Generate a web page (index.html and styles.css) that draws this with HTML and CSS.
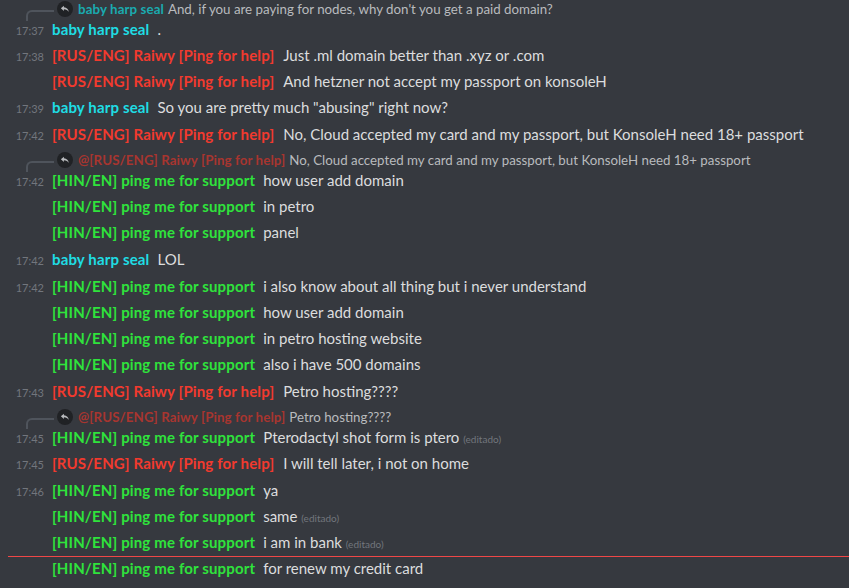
FILE: index.html
```html
<!DOCTYPE html>
<html>
<head>
<meta charset="utf-8">
<link rel="stylesheet" href="styles.css">
</head>
<body>
<div class="chat">
  <div class="reply">
    <span class="spine"></span>
    <span class="ricon"><svg viewBox="0 0 16 16" width="12" height="12"><path d="M6.5 3.5 L2.5 7 L6.5 10.5 V8.3 C9.5 8.3 11.5 9.3 13 12 C12.5 8.5 10.5 6.2 6.5 5.8 Z" fill="#b9bbbe"/></svg></span>
    <span class="rname cyan">baby harp seal</span>
    <span class="rtext">And, if you are paying for nodes, why don't you get a paid domain?</span>
  </div>
  <div class="msg"><span class="ts">17:37</span><span class="name cyan">baby harp seal</span><span class="txt">.</span></div>
  <div class="msg"><span class="ts">17:38</span><span class="name red">[RUS/ENG] Raiwy [Ping for help]</span><span class="txt">Just .ml domain better than .xyz or .com</span></div>
  <div class="msg"><span class="ts"></span><span class="name red">[RUS/ENG] Raiwy [Ping for help]</span><span class="txt">And hetzner not accept my passport on konsoleH</span></div>
  <div class="msg"><span class="ts">17:39</span><span class="name cyan">baby harp seal</span><span class="txt">So you are pretty much "abusing" right now?</span></div>
  <div class="msg start"><span class="ts">17:42</span><span class="name red">[RUS/ENG] Raiwy [Ping for help]</span><span class="txt">No, Cloud accepted my card and my passport, but KonsoleH need 18+ passport</span></div>
  <div class="reply">
    <span class="spine"></span>
    <span class="ricon"><svg viewBox="0 0 16 16" width="12" height="12"><path d="M6.5 3.5 L2.5 7 L6.5 10.5 V8.3 C9.5 8.3 11.5 9.3 13 12 C12.5 8.5 10.5 6.2 6.5 5.8 Z" fill="#b9bbbe"/></svg></span>
    <span class="rname dred">@[RUS/ENG] Raiwy [Ping for help]</span>
    <span class="rtext">No, Cloud accepted my card and my passport, but KonsoleH need 18+ passport</span>
  </div>
  <div class="msg"><span class="ts">17:42</span><span class="name green">[HIN/EN] ping me for support</span><span class="txt">how user add domain</span></div>
  <div class="msg"><span class="ts"></span><span class="name green">[HIN/EN] ping me for support</span><span class="txt">in petro</span></div>
  <div class="msg"><span class="ts"></span><span class="name green">[HIN/EN] ping me for support</span><span class="txt">panel</span></div>
  <div class="msg start"><span class="ts">17:42</span><span class="name cyan">baby harp seal</span><span class="txt">LOL</span></div>
  <div class="msg start"><span class="ts">17:42</span><span class="name green">[HIN/EN] ping me for support</span><span class="txt">i also know about all thing but i never understand</span></div>
  <div class="msg"><span class="ts"></span><span class="name green">[HIN/EN] ping me for support</span><span class="txt">how user add domain</span></div>
  <div class="msg"><span class="ts"></span><span class="name green">[HIN/EN] ping me for support</span><span class="txt">in petro hosting website</span></div>
  <div class="msg"><span class="ts"></span><span class="name green">[HIN/EN] ping me for support</span><span class="txt">also i have 500 domains</span></div>
  <div class="msg start"><span class="ts">17:43</span><span class="name red">[RUS/ENG] Raiwy [Ping for help]</span><span class="txt">Petro hosting????</span></div>
  <div class="reply">
    <span class="spine"></span>
    <span class="ricon"><svg viewBox="0 0 16 16" width="12" height="12"><path d="M6.5 3.5 L2.5 7 L6.5 10.5 V8.3 C9.5 8.3 11.5 9.3 13 12 C12.5 8.5 10.5 6.2 6.5 5.8 Z" fill="#b9bbbe"/></svg></span>
    <span class="rname dred">@[RUS/ENG] Raiwy [Ping for help]</span>
    <span class="rtext">Petro hosting????</span>
  </div>
  <div class="msg"><span class="ts">17:45</span><span class="name green">[HIN/EN] ping me for support</span><span class="txt">Pterodactyl shot form is ptero <span class="edited">(editado)</span></span></div>
  <div class="msg"><span class="ts">17:45</span><span class="name red">[RUS/ENG] Raiwy [Ping for help]</span><span class="txt">I will tell later, i not on home</span></div>
  <div class="msg start"><span class="ts">17:46</span><span class="name green">[HIN/EN] ping me for support</span><span class="txt">ya</span></div>
  <div class="msg"><span class="ts"></span><span class="name green">[HIN/EN] ping me for support</span><span class="txt">same <span class="edited">(editado)</span></span></div>
  <div class="msg"><span class="ts"></span><span class="name green">[HIN/EN] ping me for support</span><span class="txt">i am in bank <span class="edited">(editado)</span></span></div>
  <div class="divider"></div>
  <div class="msg"><span class="ts"></span><span class="name green">[HIN/EN] ping me for support</span><span class="txt">for renew my credit card</span></div>
</div>
</body>
</html>
```

FILE: styles.css
```css
html, body {
  margin: 0;
  padding: 0;
  background: #36393f;
  overflow: hidden;
}
body {
  font-family: "Lato", "Noto Sans", sans-serif;
  width: 849px;
  height: 588px;
}
.chat {
  display: flex;
  flex-direction: column;
  margin-top: -3px;
}
.msg {
  display: flex;
  align-items: baseline;
  height: 26px;
  line-height: 24px;
  font-size: 15px;
  white-space: nowrap;
}
.msg.start {
  margin-top: 1px;
}
.ts {
  width: 44px;
  text-align: right;
  padding-right: 8px;
  font-size: 11px;
  color: #72767d;
  flex: none;
}
.name {
  font-weight: 700;
  margin-right: 8px;
  letter-spacing: 0.15px;
}
.name.red {
  margin-right: 9px;
}
.txt {
  color: #dcddde;
}
.cyan { color: #1fdde4; }
.red { color: #f23a2e; }
.green { color: #2fe33c; }
.dred { color: #a8352f; }
.edited {
  font-size: 10px;
  color: #72767d;
}
.reply {
  display: flex;
  align-items: center;
  height: 16px;
  margin-top: 4px;
  font-size: 13.3px;
  white-space: nowrap;
  position: relative;
  padding-left: 57px;
}
.spine {
  position: absolute;
  left: 26px;
  top: 9px;
  width: 28px;
  height: 11px;
  border-left: 2px solid #4f545c;
  border-top: 2px solid #4f545c;
  border-top-left-radius: 6px;
  box-sizing: border-box;
}
.ricon {
  width: 16px;
  height: 16px;
  border-radius: 50%;
  background: #202225;
  display: flex;
  align-items: center;
  justify-content: center;
  margin-right: 5px;
  flex: none;
}
.rname {
  font-weight: 700;
  margin-right: 4px;
  letter-spacing: 0.1px;
}
.rname.cyan { color: #1aabb0; }
.rtext {
  color: #b9bbbe;
}
.divider {
  height: 1px;
  background: #f04747;
  margin: 0 0 -1px 8px;
  position: relative;
  z-index: 1;
}
```
